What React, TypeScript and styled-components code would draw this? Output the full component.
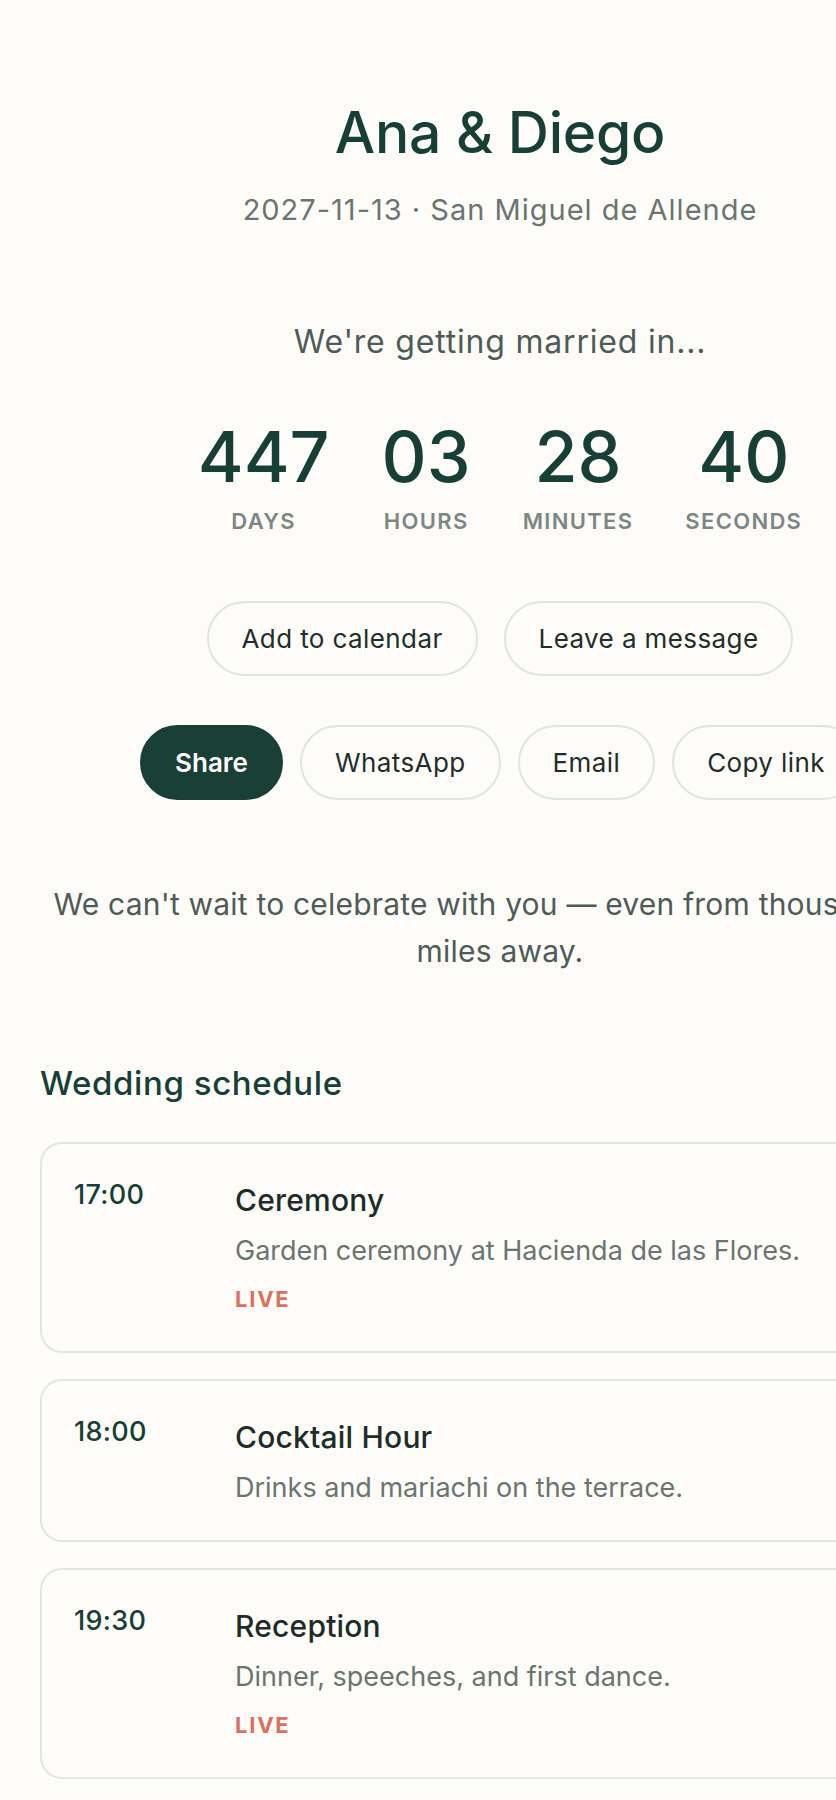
import styled, { createGlobalStyle } from "styled-components";

const GlobalStyle = createGlobalStyle`
  html, body {
    margin: 0;
    padding: 0;
    background: #fdfcf8;
    overflow-x: hidden;
  }

  body {
    font-family: Inter, "Noto Sans", "Liberation Sans", sans-serif;
    color: #1e2c28;
  }

  * {
    box-sizing: border-box;
  }
`;

const Page = styled.main`
  width: 1000px;
  padding: 99px 40px 40px;
  display: flex;
  flex-direction: column;
  align-items: center;
`;

const Title = styled.h1`
  margin: 0;
  font-size: 57px;
  line-height: 68px;
  font-weight: 500;
  color: #173f35;
  letter-spacing: -0.005em;
`;

const Subtitle = styled.p`
  margin: 23px 0 0;
  font-size: 29px;
  line-height: 40px;
  letter-spacing: 1px;
  color: #6a7571;
`;

const Tagline = styled.p`
  margin: 92px 0 0;
  font-size: 32px;
  line-height: 40px;
  letter-spacing: 0.8px;
  color: #4e5b57;
`;

const Countdown = styled.div`
  margin-top: 60px;
  display: flex;
  gap: 52px;
`;

const Unit = styled.div`
  display: flex;
  flex-direction: column;
  align-items: center;
`;

const Number = styled.span`
  font-size: 70px;
  line-height: 70px;
  font-weight: 500;
  color: #173f35;
`;

const Label = styled.span`
  margin-top: 15px;
  font-size: 22px;
  line-height: 28px;
  font-weight: 600;
  letter-spacing: 0.06em;
  color: #7c8783;
`;

const ButtonRow = styled.div<{ $gap: number; $top: number }>`
  display: flex;
  gap: ${(p) => p.$gap}px;
  margin-top: ${(p) => p.$top}px;
  white-space: nowrap;
`;

const Pill = styled.button<{ $primary?: boolean }>`
  height: 75px;
  padding: 0 33px;
  border-radius: 999px;
  font-family: inherit;
  font-size: 26px;
  letter-spacing: ${(p) => (p.$primary ? "0" : "0.4px")};
  font-weight: ${(p) => (p.$primary ? 600 : 400)};
  color: ${(p) => (p.$primary ? "#ffffff" : "#1f2e2a")};
  background: ${(p) => (p.$primary ? "#1a3f37" : "transparent")};
  border: 2px solid ${(p) => (p.$primary ? "#1a3f37" : "#dde6e1")};
  cursor: pointer;
`;

const Message = styled.p`
  margin: 81px 0 0;
  font-size: 30px;
  line-height: 47px;
  letter-spacing: 0.2px;
  color: #4e5b57;
  text-align: center;
`;

const Schedule = styled.section`
  align-self: stretch;
  margin-top: 88px;
`;

const SectionTitle = styled.h2`
  margin: 0 0 39px;
  font-size: 33px;
  line-height: 40px;
  letter-spacing: 0.6px;
  font-weight: 500;
  color: #173f35;
`;

const EventList = styled.div`
  display: flex;
  flex-direction: column;
  gap: 26px;
`;

const EventCard = styled.article`
  display: grid;
  grid-template-columns: 161px 1fr;
  padding: 36px 32px 32px;
  border: 2px solid #dfe7e2;
  border-radius: 22px;
`;

const Time = styled.span`
  font-size: 27px;
  line-height: 30px;
  font-weight: 500;
  letter-spacing: 0.3px;
  color: #173f35;
`;

const EventBody = styled.div`
  display: flex;
  flex-direction: column;
`;

const EventName = styled.h3`
  margin: 0;
  font-size: 30px;
  line-height: 40px;
  font-weight: 500;
  letter-spacing: 0.2px;
  color: #1e2c28;
`;

const EventText = styled.p`
  margin: 11px 0 0;
  font-size: 27px;
  line-height: 40px;
  color: #6a7571;
`;

const Live = styled.span`
  margin: 14px 0 6px;
  font-size: 22px;
  line-height: 28px;
  font-weight: 700;
  letter-spacing: 0.08em;
  color: #d9715d;
`;

const countdown = [
  { value: "447", label: "DAYS" },
  { value: "03", label: "HOURS" },
  { value: "28", label: "MINUTES" },
  { value: "40", label: "SECONDS" },
];

const events = [
  {
    time: "17:00",
    name: "Ceremony",
    text: "Garden ceremony at Hacienda de las Flores.",
    live: true,
  },
  {
    time: "18:00",
    name: "Cocktail Hour",
    text: "Drinks and mariachi on the terrace.",
    live: false,
  },
  {
    time: "19:30",
    name: "Reception",
    text: "Dinner, speeches, and first dance.",
    live: true,
  },
];

export default function App() {
  return (
    <>
      <GlobalStyle />
      <Page>
        <Title>Ana &amp; Diego</Title>
        <Subtitle>2027-11-13 · San Miguel de Allende</Subtitle>

        <Tagline>We're getting married in...</Tagline>
        <Countdown>
          {countdown.map((unit) => (
            <Unit key={unit.label}>
              <Number>{unit.value}</Number>
              <Label>{unit.label}</Label>
            </Unit>
          ))}
        </Countdown>

        <ButtonRow $gap={26} $top={66}>
          <Pill>Add to calendar</Pill>
          <Pill>Leave a message</Pill>
        </ButtonRow>
        <ButtonRow $gap={17} $top={49}>
          <Pill $primary>Share</Pill>
          <Pill>WhatsApp</Pill>
          <Pill>Email</Pill>
          <Pill>Copy link</Pill>
        </ButtonRow>

        <Message>
          We can't wait to celebrate with you — even from thousands of miles
          away.
        </Message>

        <Schedule>
          <SectionTitle>Wedding schedule</SectionTitle>
          <EventList>
            {events.map((event) => (
              <EventCard key={event.time}>
                <Time>{event.time}</Time>
                <EventBody>
                  <EventName>{event.name}</EventName>
                  <EventText>{event.text}</EventText>
                  {event.live && <Live>LIVE</Live>}
                </EventBody>
              </EventCard>
            ))}
          </EventList>
        </Schedule>
      </Page>
    </>
  );
}
